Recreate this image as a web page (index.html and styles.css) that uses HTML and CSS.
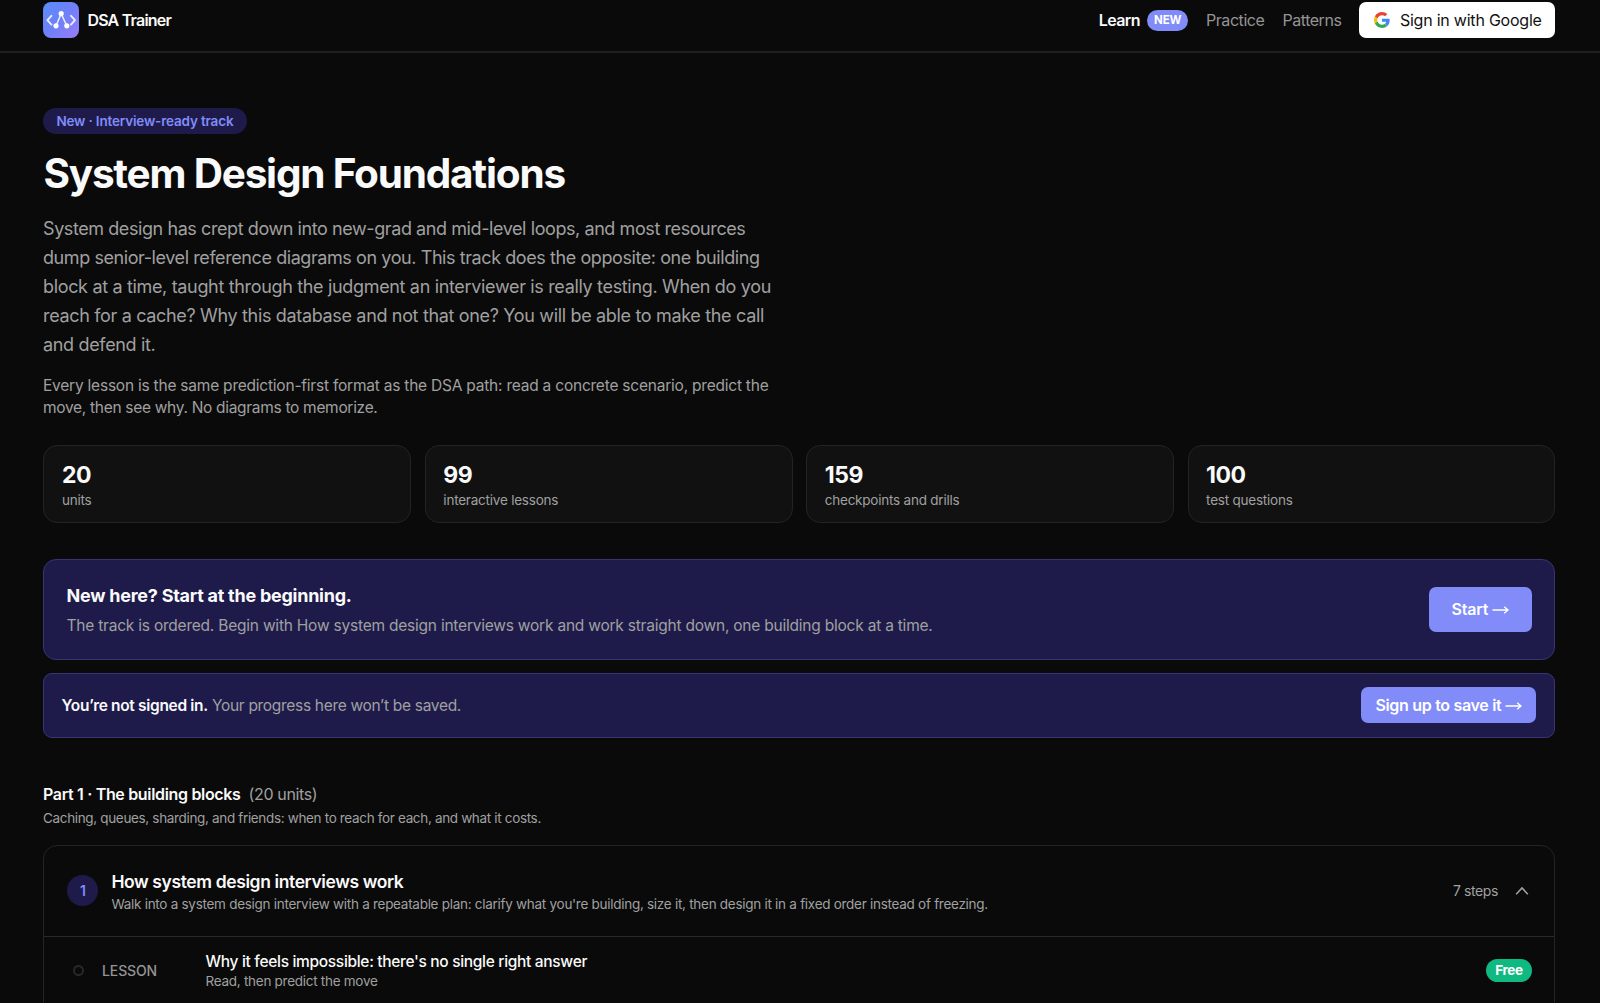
FILE: index.html
```html
<!DOCTYPE html>
<html lang="en">
<head>
<meta charset="utf-8">
<title>System Design Foundations</title>
<link rel="stylesheet" href="styles.css">
</head>
<body>
<header class="topbar">
  <a class="brand">
    <svg class="logo" viewBox="0 0 36 36">
      <defs><linearGradient id="lg" x1="0" y1="0" x2="1" y2="1"><stop offset="0" stop-color="#5a8bf8"/><stop offset=".5" stop-color="#6f80f9"/><stop offset="1" stop-color="#9b7bf8"/></linearGradient></defs>
      <rect width="36" height="36" rx="8" fill="url(#lg)"/>
      <g fill="none" stroke="#e8eeff" stroke-linecap="round" stroke-linejoin="round">
        <path d="M8.4 13.8 L4.4 18.2 L8.4 22.6 M28 13.8 L32 18.2 L28 22.6" stroke-width="1.9"/>
        <path d="M13 24 L18.2 11.6 L23.8 24" stroke-width="1.5"/>
      </g>
      <g fill="#fff"><circle cx="18.2" cy="11.6" r="2.6"/><circle cx="13" cy="23.8" r="2.6"/><circle cx="23.8" cy="23.8" r="2.6"/></g>
    </svg>
    <span class="brand-name">DSA Trainer</span>
  </a>
  <nav class="nav">
    <a class="nav-item active">Learn <span class="badge-new">NEW</span></a>
    <a class="nav-item">Practice</a>
    <a class="nav-item patterns">Patterns</a>
    <a class="google">
      <svg class="google-g" viewBox="0 0 48 48"><path fill="#EA4335" d="M24 9.5c3.54 0 6.71 1.22 9.21 3.6l6.85-6.85C35.9 2.38 30.47 0 24 0 14.62 0 6.51 5.38 2.56 13.22l7.98 6.19C12.43 13.72 17.74 9.5 24 9.5z"/><path fill="#4285F4" d="M46.98 24.55c0-1.57-.15-3.09-.38-4.55H24v9.02h12.94c-.58 2.96-2.26 5.48-4.78 7.18l7.73 6c4.51-4.18 7.09-10.36 7.09-17.65z"/><path fill="#FBBC05" d="M10.53 28.59c-.48-1.45-.76-2.99-.76-4.59s.27-3.14.76-4.59l-7.98-6.19C.92 16.46 0 20.12 0 24c0 3.88.92 7.54 2.56 10.78l7.97-6.19z"/><path fill="#34A853" d="M24 48c6.48 0 11.93-2.13 15.89-5.81l-7.73-6c-2.15 1.45-4.92 2.3-8.16 2.3-6.26 0-11.57-4.22-13.47-9.91l-7.98 6.19C6.51 42.62 14.62 48 24 48z"/></svg>
      <span>Sign in with Google</span>
    </a>
  </nav>
</header>
<main class="page">
  <span class="pill">New · Interview-ready track</span>
  <h1 class="title">System Design Foundations</h1>
  <p class="lead"><span class="lead-a">System design has crept down into new-grad and mid-level loops, and most resources<br>dump senior-level reference diagrams on you. This track does the opposite: one building</span><br>block at a time, taught through the judgment an interviewer is really testing. When do you<br>reach for a cache? Why this database and not that one? You will be able to make the call<br>and defend it.</p>
  <p class="sublead">Every lesson is the same prediction-first format as the DSA path: read a concrete scenario, predict the<br><span class="sublead-b">move, then see why. No diagrams to memorize.</span></p>
  <section class="stats">
    <div class="stat"><strong>20</strong><span>units</span></div>
    <div class="stat"><strong>99</strong><span>interactive lessons</span></div>
    <div class="stat"><strong>159</strong><span>checkpoints and drills</span></div>
    <div class="stat"><strong>100</strong><span>test questions</span></div>
  </section>
  <section class="banner start">
    <div>
      <h2 class="start-title">New here? Start at the beginning.</h2>
      <p class="start-text">The track is ordered. Begin with How system design interviews work and work straight down, one building block at a time.</p>
    </div>
    <a class="btn btn-start">Start <svg class="arrow" viewBox="0 0 17 10"><path d="M.5 5H16M12.2 1.8 16 5l-3.8 3.2"/></svg></a>
  </section>
  <section class="banner signup">
    <p class="signup-text"><strong>You’re not signed in.</strong> Your progress here won’t be saved.</p>
    <a class="btn btn-signup"><span>Sign up to save it</span> <svg class="arrow" viewBox="0 0 17 10"><path d="M.5 5H16M12.2 1.8 16 5l-3.8 3.2"/></svg></a>
  </section>
  <div class="part-head"><h2 class="part">Part 1 · The building blocks</h2><span class="part-count">(20 units)</span></div>
  <p class="part-note">Caching, queues, sharding, and friends: when to reach for each, and what it costs.</p>
  <section class="unit">
    <div class="unit-head">
      <span class="unit-num">1</span>
      <div class="unit-copy">
        <h3 class="unit-title">How system design interviews work</h3>
        <p class="unit-text">Walk into a system design interview with a repeatable plan: clarify what you're building, size it, then design it in a fixed order instead of freezing.</p>
      </div>
      <span class="steps">7 steps</span>
      <svg class="chevron" viewBox="0 0 14 10"><path d="M1.2 8.2 7 2l5.8 6.2"/></svg>
    </div>
    <div class="lesson">
      <span class="ring"></span>
      <span class="kind">LESSON</span>
      <div class="lesson-copy">
        <h4 class="lesson-title">Why it feels impossible: there's no single right answer</h4>
        <p class="lesson-text">Read, then predict the move</p>
      </div>
      <span class="free">Free</span>
    </div>
  </section>
</main>
</body>
</html>
```
FILE: styles.css
```css
* { box-sizing: border-box; margin: 0; padding: 0; }
html { overflow: hidden; }
body {
  height: 1003px;
  overflow: hidden;
  background: #0a0a0a;
  color: #fafafa;
  font-family: Inter, "Liberation Sans", sans-serif;
  white-space: nowrap;
}

.topbar {
  height: 53px;
  padding: 2px 44.6px 13px 43.4px;
  display: flex;
  align-items: center;
  justify-content: space-between;
  border-bottom: 2px solid #1f1f1f;
}
.brand { display: flex; align-items: center; gap: 8px; }
.logo { width: 36px; height: 36px; }
.brand-name { font-size: 16px; font-weight: 600; letter-spacing: -.049em; }
.nav { display: flex; align-items: center; font-size: 16px; }
.nav-item { color: #949494; letter-spacing: -.027em; margin-right: 18px; }
.nav-item.active { color: #fafafa; font-weight: 600; letter-spacing: -.036em; display: flex; align-items: center; gap: 7.5px; }
.nav-item.patterns { letter-spacing: -.029em; }
.badge-new {
  height: 21px; width: 40.5px; border-radius: 11px;
  display: flex; align-items: center; justify-content: center;
  background: #818cf8; color: #fff;
  font-size: 11.5px; font-weight: 700; letter-spacing: -.01em;
}
.google {
  width: 196px; height: 36px; border-radius: 7px;
  display: flex; align-items: center; gap: 10px; padding-left: 14.5px;
  background: #fff; color: #111; font-weight: 400; letter-spacing: -.014em;
}
.google-g { width: 16px; height: 16px; }

.page { padding: 54.5px 44.6px 0 43.4px; }
.pill {
  display: flex; align-items: center; width: 203.5px; height: 26.5px; padding-left: 13px;
  border-radius: 14px; background: #1e1b4b; color: #818cf8;
  font-size: 13.5px; font-weight: 600; letter-spacing: -.0126em;
}
.title { margin-top: 15px; font-size: 40.5px; line-height: 50px; font-weight: 700; letter-spacing: -.0297em; }
.lead { margin-top: 15px; font-size: 18px; line-height: 29.1px; color: #a0a0a0; letter-spacing: -.0186em; margin-left: -.4px; }
.lead-a { letter-spacing: -.0233em; }
.sublead { margin-top: 15.1px; font-size: 15.5px; line-height: 22.3px; color: #a0a0a0; letter-spacing: -.0143em; margin-left: -.4px; }
.sublead-b { letter-spacing: -.0196em; }

.stats { margin-top: 25.8px; display: grid; grid-template-columns: repeat(4, 1fr); gap: 13.5px; }
.stat {
  height: 78.5px; padding: 17px 17.6px 0; border: 1px solid #232323; border-radius: 14px;
  background: #111; display: flex; flex-direction: column;
}
.stat strong { font-size: 23px; line-height: 25px; font-weight: 700; letter-spacing: -.02em; }
.stat span { margin-top: 3px; font-size: 13.5px; line-height: 18px; color: #a0a0a0; letter-spacing: -.0165em; }

.banner {
  display: flex; align-items: center; justify-content: space-between;
  background: #1e1b4b; border: 1px solid #383476;
}
.start { margin-top: 35.5px; height: 101px; padding: 0 22.5px 0 22.2px; border-radius: 13px; }
.start-title { font-size: 18px; line-height: 28px; font-weight: 700; letter-spacing: -.0142em; padding-top: 1px; }
.start-text { margin-top: 3px; font-size: 15.5px; line-height: 25px; color: #a0a0a0; letter-spacing: -.0142em; }
.btn {
  display: flex; align-items: center; justify-content: center; gap: 4px;
  background: #818cf8; color: #fff; border-radius: 7px;
  font-size: 16px; font-weight: 600; letter-spacing: -.0076em;
}
.btn-start { width: 103px; height: 45px; }
.btn-signup { width: 175px; height: 36px; letter-spacing: -.0196em; }
.arrow { width: 17px; height: 10px; margin-top: 2px; fill: none; stroke: #fff; stroke-width: 1.3; }
.signup { margin-top: 13px; height: 65px; padding: 0 18px 0 17.2px; border-radius: 9px; }
.signup-text { font-size: 15.5px; color: #a0a0a0; letter-spacing: -.02em; }
.signup-text strong { color: #fafafa; font-weight: 600; letter-spacing: -.0205em; }

.part-head { margin-top: 44px; height: 24px; display: flex; align-items: center; gap: 8px; margin-left: -.4px; }
.part { font-size: 16px; font-weight: 600; letter-spacing: -.0205em; }
.part-count { font-size: 16px; color: #a0a0a0; letter-spacing: -.023em; }
.part-note { margin-top: 3px; font-size: 13.5px; line-height: 19px; color: #a0a0a0; letter-spacing: -.0251em; margin-left: -.4px; }

.unit { margin-top: 17px; height: 200px; border: 1px solid #242424; border-radius: 14px 14px 0 0; }
.unit-head { height: 91px; padding: 0 25.5px 0 23px; display: flex; align-items: center; border-bottom: 1px solid #292929; }
.unit-num {
  width: 31px; height: 31px; border-radius: 50%; background: #1e1b4b; color: #818cf8;
  display: flex; align-items: center; justify-content: center; font-size: 14px; font-weight: 600;
}
.unit-copy { flex: 1; margin-left: 13px; padding-top: 3px; }
.unit-title { font-size: 17.5px; line-height: 24px; font-weight: 600; letter-spacing: -.0222em; }
.unit-text { font-size: 13.5px; line-height: 21px; color: #a0a0a0; letter-spacing: -.0207em; }
.steps { font-size: 14px; color: #a0a0a0; letter-spacing: -.0287em; }
.chevron { width: 14px; height: 10px; margin-left: 17px; fill: none; stroke: #a0a0a0; stroke-width: 1.6; }
.lesson { height: 67px; padding: 0 22.5px 0 28.2px; display: flex; align-items: center; }
.ring { width: 11px; height: 11px; border: 2px solid #292929; border-radius: 50%; }
.kind { width: 103.5px; margin-left: 18.5px; font-size: 14px; font-weight: 500; color: #949494; letter-spacing: -.0091em; }
.lesson-copy { flex: 1; padding-top: 3px; }
.lesson-title { font-size: 15.5px; line-height: 20px; font-weight: 500; letter-spacing: -.0205em; }
.lesson-text { font-size: 13.5px; line-height: 19px; color: #a0a0a0; letter-spacing: -.0205em; }
.free {
  width: 46px; height: 23px; border-radius: 12px; background: #10b981; color: #fff;
  display: flex; align-items: center; justify-content: center; font-size: 13.5px; font-weight: 700; letter-spacing: -.026em;
}
```
